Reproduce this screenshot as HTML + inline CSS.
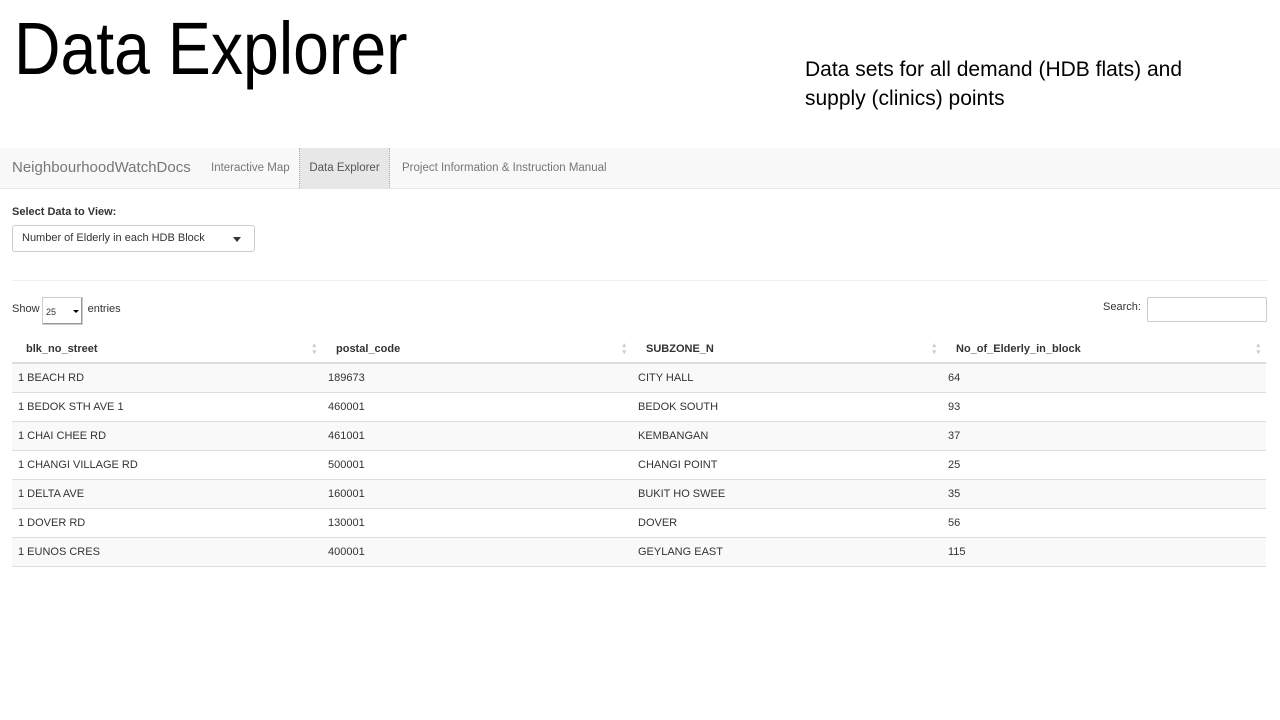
<!DOCTYPE html>
<html><head><style>
body{margin:0;width:1280px;height:720px;background:#fff;font-family:"Liberation Sans",Arial,sans-serif;position:relative;overflow:hidden;color:#333}
.t{position:absolute;left:14px;top:6px;font-size:74px;color:#000;transform:scaleX(0.87);transform-origin:left top;white-space:nowrap}
.s{position:absolute;left:805px;top:55px;font-size:21px;line-height:29px;color:#000}
.nav{position:absolute;left:0;top:148px;width:1280px;height:40px;background:#f8f8f8;border-bottom:1px solid #e7e7e7}
.nav span{position:absolute;top:0;line-height:40px;font-size:11.5px;color:#777;white-space:nowrap}
.nav span.brand{font-size:15px;left:12px;color:#777}
.act{background:#e7e7e7;color:#555!important;text-align:center;border:1px dotted #aac;border-top:0;border-bottom:0;box-sizing:border-box}
.lbl{position:absolute;left:12px;top:206px;font-size:11px;font-weight:bold}
.sel{position:absolute;left:12px;top:225px;width:243px;height:27px;border:1px solid #ccc;border-radius:3px;box-sizing:border-box;font-size:11px;line-height:25px;padding-left:9px}
.sel:after{content:"";position:absolute;right:13px;top:11px;border:4px solid transparent;border-top:5px solid #333}
.hr{position:absolute;left:12px;top:280px;width:1256px;border-top:1px solid #eee}
.show{position:absolute;left:12px;top:303px;font-size:11px}
.dd{position:absolute;left:42px;top:297px;width:41px;height:28px;border:1px solid #ccc;box-sizing:border-box;font-size:9px;line-height:28px;padding-left:3px;box-shadow:inset -1px -1px 0 #999}
.dd:after{content:"";position:absolute;right:3px;top:12px;border:3px solid transparent;border-top:3px solid #000}
.srch{position:absolute;left:1103px;top:301px;font-size:11px}
.in{position:absolute;left:1147px;top:297px;width:120px;height:25px;border:1px solid #ccc;box-sizing:border-box;border-radius:2px}
table{position:absolute;left:12px;top:335px;width:1254px;border-collapse:collapse;font-size:11px;table-layout:fixed}
th{text-align:left;height:27px;padding:0 14px;border-bottom:2px solid #ddd;position:relative;font-size:11px}
th:after{content:"\25B4\A\25BE";white-space:pre;position:absolute;right:6px;top:7px;font-size:7px;line-height:7px;color:#ccc}
td{height:28px;padding:0 6px;border-bottom:1px solid #ddd}
tbody tr:nth-child(odd) td{background:#f9f9f9}
</style></head><body>
<div class="t">Data Explorer</div>
<div class="s">Data sets for all demand (HDB flats) and<br>supply (clinics) points</div>
<div class="nav">
<span class="brand">NeighbourhoodWatchDocs</span>
<span style="left:211px">Interactive Map</span>
<span class="act" style="left:299px;width:91px">Data Explorer</span>
<span style="left:402px">Project Information &amp; Instruction Manual</span>
</div>
<div class="lbl">Select Data to View:</div>
<div class="sel">Number of Elderly in each HDB Block</div>
<div class="hr"></div>
<div class="show">Show <span style="display:inline-block;width:42px"></span> entries</div>
<div class="dd">25</div>
<div class="srch">Search:</div><div class="in"></div>
<table>
<colgroup><col style="width:310px"><col style="width:310px"><col style="width:310px"><col style="width:324px"></colgroup>
<thead><tr><th>blk_no_street</th><th>postal_code</th><th>SUBZONE_N</th><th>No_of_Elderly_in_block</th></tr></thead>
<tbody>
<tr><td>1 BEACH RD</td><td>189673</td><td>CITY HALL</td><td>64</td></tr>
<tr><td>1 BEDOK STH AVE 1</td><td>460001</td><td>BEDOK SOUTH</td><td>93</td></tr>
<tr><td>1 CHAI CHEE RD</td><td>461001</td><td>KEMBANGAN</td><td>37</td></tr>
<tr><td>1 CHANGI VILLAGE RD</td><td>500001</td><td>CHANGI POINT</td><td>25</td></tr>
<tr><td>1 DELTA AVE</td><td>160001</td><td>BUKIT HO SWEE</td><td>35</td></tr>
<tr><td>1 DOVER RD</td><td>130001</td><td>DOVER</td><td>56</td></tr>
<tr><td>1 EUNOS CRES</td><td>400001</td><td>GEYLANG EAST</td><td>115</td></tr>
</tbody></table>
</body></html>
